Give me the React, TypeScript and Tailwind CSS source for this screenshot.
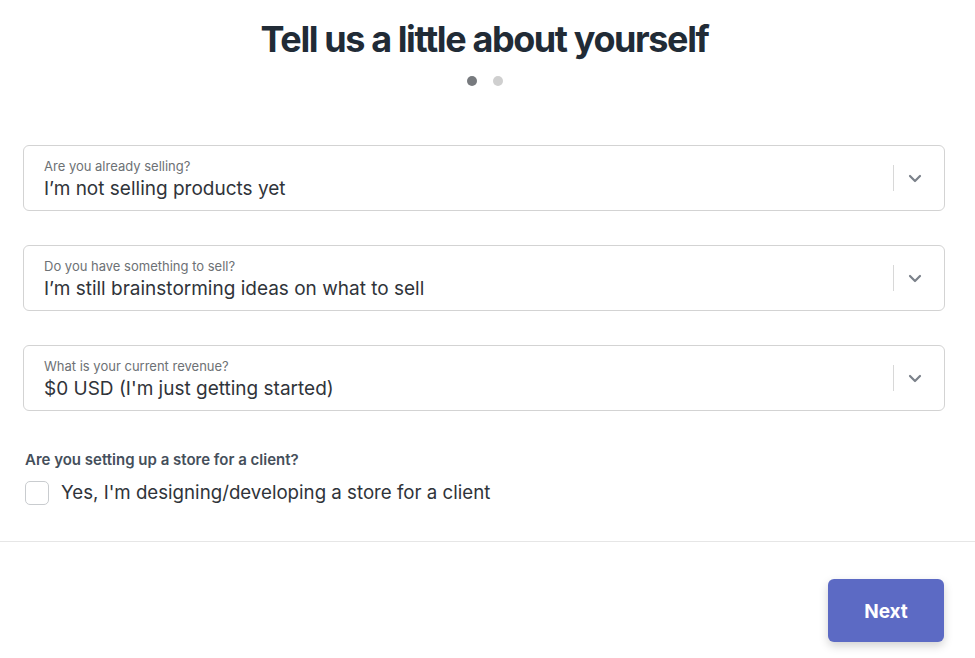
import React from "react";

function Chevron() {
  return (
    <svg width="14" height="9" viewBox="0 0 14 9" fill="none">
      <path d="M2 2l5 5 5-5" stroke="#7b818a" strokeWidth="2.2" strokeLinecap="round" strokeLinejoin="round" />
    </svg>
  );
}

function SelectBox({ label, value }: { label: string; value: string }) {
  return (
    <div className="flex h-[66px] items-center rounded-[6px] border border-[#d3d3d3] bg-white">
      <div className="flex flex-1 flex-col pl-[20px] pt-[2px]">
        <span className="text-[13px] leading-[16px] text-[#6d7175]">{label}</span>
        <span className="mt-[3px] text-[19px] leading-[24px] text-[#30343a]">{value}</span>
      </div>
      <div className="h-[26px] w-px bg-[#d8d8d8]" />
      <div className="flex w-[50px] items-center justify-start pl-[14px]">
        <Chevron />
      </div>
    </div>
  );
}

export default function App() {
  return (
    <div className="h-[658px] w-full bg-white font-['Inter','Noto_Sans',sans-serif]">
      <div className="flex flex-col items-center pt-[17px]">
        <h1 className="mr-[6px] text-[36px] font-bold leading-[44px] tracking-[-1.4px] text-[#212b36]">
          Tell us a little about yourself
        </h1>
        <div className="mr-[6px] mt-[15px] flex gap-[16px]">
          <span className="h-[10px] w-[10px] rounded-full bg-[#777a7e]" />
          <span className="h-[10px] w-[10px] rounded-full bg-[#cfcfcf]" />
        </div>
      </div>
      <div className="mt-[59px] flex flex-col gap-[34px] pl-[23px] pr-[30px]">
        <SelectBox label="Are you already selling?" value="I’m not selling products yet" />
        <SelectBox label="Do you have something to sell?" value="I’m still brainstorming ideas on what to sell" />
        <SelectBox label="What is your current revenue?" value="$0 USD (I'm just getting started)" />
      </div>
      <div className="mt-[40px] pl-[25px]">
        <div className="text-[15px] font-semibold leading-[18px] text-[#454f5b]">Are you setting up a store for a client?</div>
        <label className="mt-[12px] flex items-center gap-[12px]">
          <span className="h-[24px] w-[24px] rounded-[5px] border border-[#c9cccf] bg-white" />
          <span className="text-[18.7px] leading-[24px] text-[#30343a]">Yes, I'm designing/developing a store for a client</span>
        </label>
      </div>
      <div className="mt-[36px] h-px w-full bg-[#e6e6e6]" />
      <div className="flex justify-end pr-[31px] pt-[37px]">
        <button className="h-[63px] w-[116px] rounded-[6px] bg-[#5c6ac4] pt-[3px] text-[19px] font-bold text-white shadow-[0_4px_10px_rgba(0,0,0,0.18)]">
          Next
        </button>
      </div>
    </div>
  );
}
